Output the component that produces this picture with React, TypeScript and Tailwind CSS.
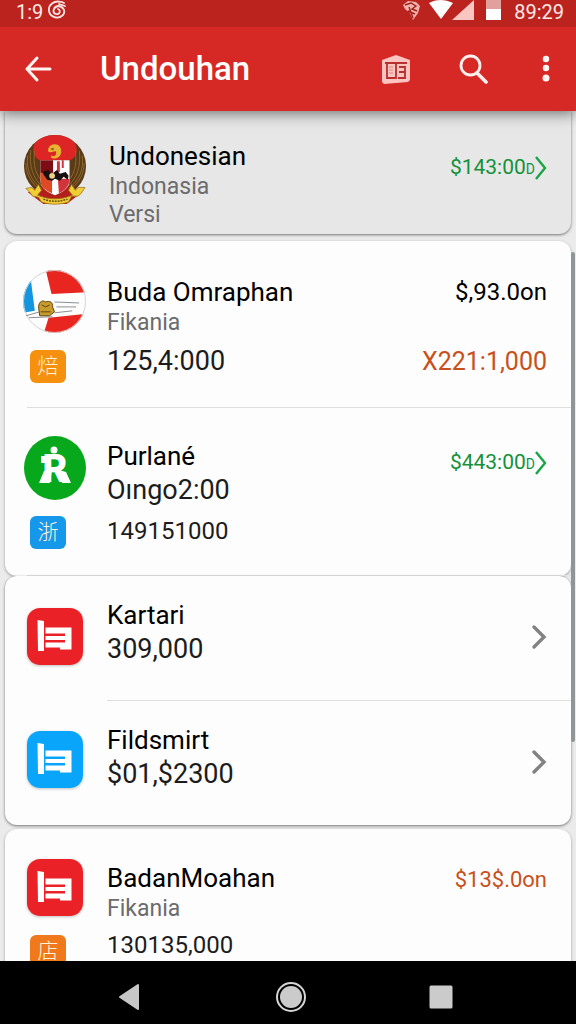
import type { ReactNode } from "react";

interface RowProps {
  icon: ReactNode;
  iconPad: string;
  textPad: string;
  badge?: ReactNode;
  children: ReactNode;
  aside: ReactNode;
}

function Row({ icon, iconPad, textPad, badge, children, aside }: RowProps) {
  return (
    <div className="flex">
      <div className={`w-[102px] shrink-0 pl-[18px] ${iconPad}`}>
        <div className="flex min-h-16 w-16 items-center justify-center">
          {icon}
        </div>
        {badge}
      </div>
      <div className={`min-w-0 flex-1 ${textPad}`}>{children}</div>
      <div className="flex shrink-0 flex-col items-end pr-6">{aside}</div>
    </div>
  );
}

function Name({ children }: { children: ReactNode }) {
  return (
    <h2 className="text-[26px] leading-[34px] whitespace-nowrap text-black">
      {children}
    </h2>
  );
}

function Sub({ children }: { children: ReactNode }) {
  return (
    <p className="text-[23px] leading-[28px] text-[#6b6b6d]">{children}</p>
  );
}

function Value({ children }: { children: ReactNode }) {
  return (
    <p className="text-[27px] leading-[34px] whitespace-nowrap text-[#1c1c1c]">
      {children}
    </p>
  );
}

// nine digits or more
function LongValue({ children }: { children: ReactNode }) {
  return (
    <p className="text-[24px] leading-[34px] whitespace-nowrap text-[#1c1c1c]">
      {children}
    </p>
  );
}

function Badge({ color, children }: { color: string; children: ReactNode }) {
  return (
    <div
      className={`mt-4 ml-[7px] flex h-[33px] w-9 items-center justify-center rounded-md text-[21px] font-light text-[#fff3d6] ${color}`}
    >
      {children}
    </div>
  );
}

function GreenAmount({ children }: { children: ReactNode }) {
  return (
    <a
      href="#detail"
      className="flex items-center text-[21px] leading-[28px] text-[#14913a]"
    >
      <span>
        {children}
        <span className="text-[14px]">D</span>
      </span>
      <svg width="12" height="26" viewBox="0 0 12 26" fill="none">
        <path d="M1 2 10 13 1 24" stroke="#1aa545" strokeWidth="2.4" />
      </svg>
    </a>
  );
}

function MoreButton({ label }: { label: string }) {
  return (
    <button aria-label={label} className="mt-[46px]">
      <svg width="16" height="30" viewBox="0 0 16 30" fill="none">
        <path
          d="M3 5 13 15 3 25"
          stroke="#828282"
          strokeWidth="3.4"
          strokeLinecap="round"
        />
      </svg>
    </button>
  );
}

function AppIcon({ color }: { color: string }) {
  return (
    <svg
      width="56"
      height="57"
      viewBox="0 0 56 57"
      className="rounded-[13px] shadow-[0_1px_3px_rgba(0,0,0,0.25)]"
    >
      <rect width="56" height="57" fill={color} />
      <g fill="#fff">
        <path d="M10.500 12 17 13V43H11Z" />
        <path d="M18.500 19.500H44.500V41.500H33V39.500H18.500V34.500H38V32H18.500V28H38V25.500H18.500Z" />
      </g>
    </svg>
  );
}

function Emblem() {
  return (
    <svg width="66" height="73" viewBox="0 0 66 73">
      <circle cx="33" cy="33" r="32" fill="#5b3a17" />
      <path d="M5 60 33 48 61 60 45 72H21Z" fill="#b3201b" />
      <path
        d="M12 10C20-2 46-2 54 10 57 16 55 24 49 27H17C11 24 9 16 12 10Z"
        fill="#dc2524"
      />
      <g stroke="#8d6a2c" strokeWidth="1" fill="none">
        <path d="M8 17C6 32 10 46 21 55M5 22C3 36 8 48 19 56M12 17C10 32 13 43 22 51M3 30C3 41 8 50 17 57" />
        <path d="M58 17C60 32 56 46 45 55M61 22C63 36 58 48 47 56M54 17C56 32 53 43 44 51M63 30C63 41 58 50 49 57" />
      </g>
      <path d="M18 27H48V48C48 55 41 60 33 63 25 60 18 55 18 48Z" fill="#fff" />
      <path d="M18 27H31V40H18Z" fill="#7d0d14" />
      <path d="M18 40H30V61C23 58 18 54 18 48Z" fill="#de4a24" />
      <path d="M35 28H38V39H35ZM40 27H42V35H40ZM36 46H48C48 54 43 58 37 61Z" fill="#d2343b" />
      <path
        d="M20 39 26 37 30 41 35 37 38 41 44 39 47 43 46 47 42 44 38 48 33 46 30 48 25 47 22 43Z"
        fill="#17100e"
      />
      <circle cx="30" cy="43" r="3" fill="#ecd08a" />
      <path
        d="M26 15C28 10 35 9 38 13 41 18 39 24 34 25 31 26 28 24 29 22 32 24 35 22 34 18 32 17 29 20 26 18Z"
        fill="#e8b332"
      />
      <path d="M28 15 32 14 31 17Z" fill="#8a5710" />
      <path
        d="M3 56 9 55 12 58 16 52 19 58 15 63C27 68 39 68 51 63L47 58 50 52 54 58 57 55 64 55 60 61 57 64 50 64 47 70C38 73 28 73 19 70L16 65 10 64 7 60Z"
        fill="#f0cf35"
        stroke="#a0701b"
        strokeWidth="0.8"
      />
      <path
        d="M21 67C29 70 37 70 46 67"
        stroke="#6d4a12"
        strokeWidth="1.500"
        strokeDasharray="2 1"
        fill="none"
      />
    </svg>
  );
}

function FlagIcon() {
  return (
    <svg width="65" height="65" viewBox="0 0 65 65">
      <defs>
        <clipPath id="flag-round">
          <circle cx="32" cy="32.500" r="32" />
        </clipPath>
      </defs>
      <g clipPath="url(#flag-round)">
        <rect width="65" height="65" fill="#fdfdfd" />
        <path d="M23 0H65V23L29 25Z" fill="#e8261f" />
        <path d="M0 10 8 11 12 42 0 44Z" fill="#1495e0" />
        <path d="M26 49 65 45V65H21Z" fill="#e8261f" />
      </g>
      <circle cx="32" cy="32.500" r="31.500" fill="none" stroke="#d2d2d4" />
      <g stroke="#8b8d90" strokeWidth="1" fill="none">
        <path d="M3 47 17 43M6 49 30 48M32 33 57 34M34 38 54 38M32 44 50 42" />
      </g>
      <path
        d="M16 40C15 34 19 30 23 33 27 31 31 34 30 38L32 43 27 47H17Z"
        fill="#c99a2c"
        stroke="#5d430f"
        strokeWidth="1"
      />
      <path d="M19 36 23 38 27 36M18 43H28" stroke="#5d430f" fill="none" />
    </svg>
  );
}

function RunnerIcon() {
  return (
    <svg width="62" height="64" viewBox="0 0 62 64">
      <ellipse cx="31" cy="32" rx="31" ry="32" fill="#07a81c" />
      <circle cx="30" cy="14" r="3.500" fill="#fff" />
      <text
        x="31"
        y="46"
        textAnchor="middle"
        fontFamily="Roboto, sans-serif"
        fontWeight="900"
        fontSize="38"
        fill="#fff"
      >
        R
      </text>
      <path
        d="M17 20H24V27H17ZM20 35 28 34 26 47H15ZM35 34 42 36 47 47H38Z"
        fill="#fff"
      />
    </svg>
  );
}

function StatusBar() {
  return (
    <div className="flex h-[27px] items-start justify-between bg-[#bb231f] pr-3 pl-4 text-[#ffe9e7]">
      <div className="flex items-start gap-1">
        <span className="text-[20px] leading-[24px]">1:9</span>
        <svg width="20" height="20" viewBox="0 0 20 20" fill="none">
          <g stroke="#ffe3e0" strokeWidth="1.800" strokeLinecap="round">
            <path d="M14 2C7 0 1 5 2 11 3 17 11 20 16 15 19 11 16 6 11 6 6 7 5 13 9 14 13 15 14 10 11 9" />
            <path d="M12 4 18 6M15 2 17 3" />
          </g>
        </svg>
      </div>
      <div className="flex items-start">
        <svg width="100" height="22" viewBox="0 0 100 22" className="mr-3">
          <path
            d="M1 5 6 1 14 2 18 6 16 13 11 20 8 13 3 9Z"
            fill="#f0b3ae"
          />
          <path
            d="M3 5 9 3 14 6 10 9 15 11M7 7 11 18M6 11 13 14"
            stroke="#a51d1b"
            strokeWidth="1.400"
            fill="none"
          />
          <path d="M27 3C34-1 43-1 51 3L39 19Z" fill="#fff" />
          <path d="M72 0V20H50Z" fill="#f9c6c2" />
          <path d="M84 0H99V9H84Z" fill="#e2a09c" />
          <path d="M84 9H99V20H84Z" fill="#fff" />
        </svg>
        <span className="text-[20px] leading-[24px]">89:29</span>
      </div>
    </div>
  );
}

function TopBar() {
  return (
    <div className="flex h-21 items-center bg-[#d62926] pr-4 pl-6 text-white">
      <button aria-label="Back">
        <svg width="28" height="28" viewBox="0 0 28 28" fill="none">
          <path
            d="M26 14H3M13 3 3 14 13 25"
            stroke="#fff3f2"
            strokeWidth="3"
            strokeLinecap="round"
            strokeLinejoin="round"
          />
        </svg>
      </button>
      <h1 className="ml-12 flex-1 text-[33px] leading-[40px] font-medium">
        Undouhan
      </h1>
      <button aria-label="News">
        <svg width="30" height="30" viewBox="0 0 30 30">
          <path
            d="M1 6 15 1 29 6V26L27 28 3 30 1 28Z"
            fill="#ffc4c0"
          />
          <path
            d="M4 9H26M6 10V24H14M15 10V25M18 13H24V24H17M18 18H24"
            stroke="#b5302e"
            strokeWidth="1.800"
            fill="none"
          />
          <path d="M8 13H12M8 16H12M8 19H12" stroke="#d8827e" fill="none" />
        </svg>
      </button>
      <button aria-label="Search" className="ml-12">
        <svg width="30" height="30" viewBox="0 0 30 30" fill="none">
          <circle cx="11.500" cy="11.500" r="9.500" stroke="#fff0ee" strokeWidth="2.800" />
          <path
            d="M18 19 27 28"
            stroke="#fff0ee"
            strokeWidth="3.600"
            strokeLinecap="round"
          />
        </svg>
      </button>
      <button aria-label="More options" className="ml-[43px]">
        <svg width="28" height="28" viewBox="0 0 28 28" fill="#fff3f2">
          <circle cx="14" cy="4" r="3.200" />
          <circle cx="14" cy="13" r="3.200" />
          <circle cx="14" cy="23" r="3.500" />
        </svg>
      </button>
    </div>
  );
}

function BottomNav() {
  return (
    <nav className="relative z-10 flex h-[63px] shrink-0 items-center justify-between bg-black pt-2 pr-[20%] pl-[19%]">
      <button aria-label="Back" className="flex w-10 justify-center">
        <svg width="22" height="28" viewBox="0 0 22 28">
          <path
            d="M2 14 20 2V26Z"
            fill="#c6c6c6"
            stroke="#c6c6c6"
            strokeWidth="2"
            strokeLinejoin="round"
          />
        </svg>
      </button>
      <button aria-label="Home" className="flex w-11 justify-end">
        <svg width="32" height="32" viewBox="0 0 32 32">
          <circle cx="16" cy="16" r="14" fill="none" stroke="#d6d6d6" strokeWidth="2" />
          <circle cx="16" cy="16" r="11" fill="#cbcbcb" />
        </svg>
      </button>
      <button aria-label="Recent apps" className="flex w-10 justify-center">
        <svg width="24" height="24" viewBox="0 0 24 24">
          <rect x="0.500" y="0.500" width="23" height="23" rx="1.500" fill="#cbcbcb" />
        </svg>
      </button>
    </nav>
  );
}

export default function App() {
  return (
    <div className="flex h-screen flex-col overflow-hidden bg-[#ebebec] font-[Roboto,'Noto_Sans_CJK_SC',sans-serif]">
      <header className="relative z-10 shrink-0 shadow-[0_2px_14px_rgba(0,0,0,0.55)]">
        <StatusBar />
        <TopBar />
      </header>

      <main className="relative min-h-0 flex-1 overflow-hidden px-[5px]">
        <section className="mb-[7px] rounded-b-xl bg-[#e7e7e8] shadow-[0_1px_3px_rgba(0,0,0,0.5)]">
          <Row
            icon={<Emblem />}
            iconPad="pt-[22px]"
            textPad="pt-7 pb-[5px] pl-0.5"
            aside={
              <div className="mt-[42px]">
                <GreenAmount>$143:00</GreenAmount>
              </div>
            }
          >
            <Name>Undonesian</Name>
            <Sub>Indonasia</Sub>
            <Sub>Versi</Sub>
          </Row>
        </section>

        <section className="rounded-xl bg-[#fdfdfd] shadow-[0_1px_3px_rgba(0,0,0,0.35)]">
          <Row
            icon={<FlagIcon />}
            iconPad="pt-7"
            textPad="pt-[34px] pb-[29px]"
            badge={<Badge color="bg-[#f6900f]">焙</Badge>}
            aside={
              <>
                <p className="mt-[35px] text-[24px] leading-[32px] text-black">
                  $,93.0on
                </p>
                <p className="mt-[38px] text-[25px] leading-[32px] text-[#c8501a]">
                  X221:1,000
                </p>
              </>
            }
          >
            <Name>Buda Omraphan</Name>
            <Sub>Fikania</Sub>
            <div className="mt-[7px]">
              <Value>125,4:000</Value>
            </div>
          </Row>
          <hr className="ml-[22px] border-[#dcdedf]" />
          <Row
            icon={<RunnerIcon />}
            iconPad="pt-7"
            textPad="pt-[31px] pb-[27px]"
            badge={<Badge color="bg-[#1597ea]">浙</Badge>}
            aside={
              <div className="mt-10">
                <GreenAmount>$443:00</GreenAmount>
              </div>
            }
          >
            <Name>Purlané</Name>
            <Value>Oıngo2:00</Value>
            <div className="mt-[7px]">
              <LongValue>149151000</LongValue>
            </div>
          </Row>
          <hr className="ml-[22px] border-[#e4e5e6]" />
        </section>

        <section className="mb-1 rounded-xl bg-[#fdfdfd] shadow-[0_1px_3px_rgba(0,0,0,0.5)]">
          <Row
            icon={<AppIcon color="#ea2127" />}
            iconPad="pt-7"
            textPad="pt-[22px] pb-[34px]"
            aside={<MoreButton label="Open Kartari" />}
          >
            <Name>Kartari</Name>
            <Value>309,000</Value>
          </Row>
          <hr className="ml-[102px] border-[#dcdedf]" />
          <Row
            icon={<AppIcon color="#08a5fb" />}
            iconPad="pt-[26px]"
            textPad="pt-[22px] pb-[34px]"
            aside={<MoreButton label="Open Fildsmirt" />}
          >
            <Name>Fildsmirt</Name>
            <Value>$01,$2300</Value>
          </Row>
        </section>

        <section className="rounded-xl bg-[#fdfdfd] shadow-[0_1px_3px_rgba(0,0,0,0.35)]">
          <Row
            icon={<AppIcon color="#ea2127" />}
            iconPad="pt-[26px]"
            textPad="pt-8 pb-[30px]"
            badge={<Badge color="bg-[#f0791d]">店</Badge>}
            aside={
              <p className="mt-[37px] text-[22px] leading-[28px] text-[#c8501a]">
                $13$.0on
              </p>
            }
          >
            <Name>BadanMoahan</Name>
            <Sub>Fikania</Sub>
            <div className="mt-[5px]">
              <LongValue>130135,000</LongValue>
            </div>
          </Row>
        </section>

        {/* scroll thumb */}
        <div className="absolute top-[141px] right-px h-[490px] w-1 rounded-full bg-[#929595]" />
      </main>

      <BottomNav />
    </div>
  );
}
